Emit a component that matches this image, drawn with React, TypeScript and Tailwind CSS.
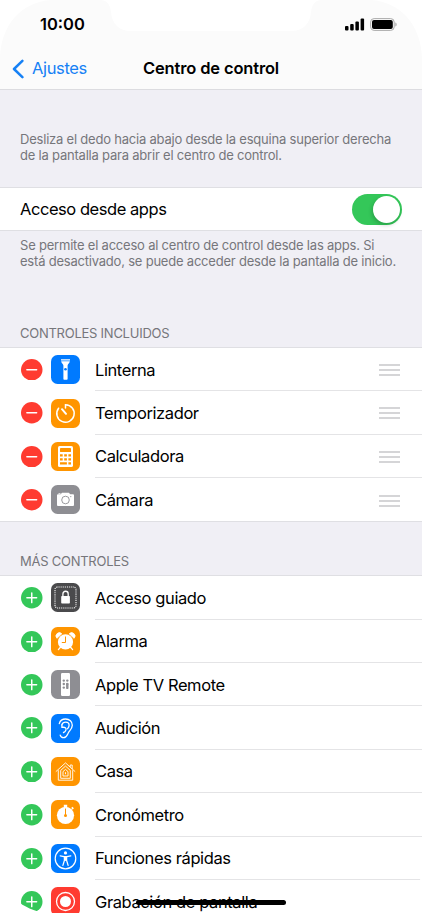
import { ReactNode } from 'react';

const glyphs: Record<string, ReactNode> = {
  flashlight: (
    <>
      <path d="M10 4.3h9v1.2h-9zM10.2 6.2h8.6c0 2-2.2 2.6-2.2 4.4V24a.8.8 0 0 1-.8.8h-2.6a.8.8 0 0 1-.8-.8V10.6c0-1.8-2.2-2.4-2.2-4.4z" fill="#fff" />
      <circle cx="14.5" cy="14.2" r="1.3" fill="#007aff" />
    </>
  ),
  timer: (
    <g fill="none" stroke="#fff" strokeLinecap="round">
      <path d="M14.5 9V5.8a8.7 8.7 0 1 1-6.9 3.400" strokeWidth="1.5" />
      <path d="M11 10.200l4 4.600" strokeWidth="2" />
    </g>
  ),
  calculator: (
    <>
      <rect x="7" y="4" width="15" height="21" rx="1.6" fill="#fff" />
      <g fill="#ff9500">
        <rect x="9" y="6" width="11" height="4" rx=".4" />
        <path d="M9 12.2h2.7v2.2H9zM13.2 12.2h2.7v2.2h-2.7zM17.4 12.2h2.6v2.2h-2.6zM9 16.2h2.7v2.2H9zM13.2 16.2h2.7v2.2h-2.7zM17.4 16.2h2.6v2.2h-2.6zM9 20.2h6.9v2.2H9zM17.4 20.2h2.6v2.2h-2.6z" />
      </g>
    </>
  ),
  camera: (
    <>
      <path d="M7 9.2h2.7l1.3-1.4h6.8l1.5 1.4H22a1 1 0 0 1 1 1v9.9a1 1 0 0 1-1 1H7a1 1 0 0 1-1-1v-9.9a1 1 0 0 1 1-1zM7.5 8h2v.8h-2z" fill="#fff" />
      <circle cx="14.5" cy="15" r="3.8" fill="none" stroke="#8e8e93" strokeWidth=".9" />
      <circle cx="19.8" cy="11.6" r=".6" fill="#8e8e93" />
    </>
  ),
  guided: (
    <>
      <rect x="4" y="4" width="21" height="21" rx="2.5" fill="none" stroke="#fff" strokeWidth="1.1" strokeDasharray="1 .9" />
      <rect x="10.2" y="13" width="8.7" height="7.6" rx=".8" fill="#fff" />
      <path d="M11.9 13.2v-2.3a2.65 2.65 0 0 1 5.3 0v2.3" fill="none" stroke="#fff" strokeWidth="1.3" />
    </>
  ),
  alarm: (
    <>
      <path d="M5.9 11.3a3.2 3.2 0 0 1 4.9-4.5zM23.1 11.3a3.2 3.2 0 0 0-4.9-4.5z" fill="#fff" stroke="#fff" strokeWidth=".8" strokeLinejoin="round" />
      <path d="M9.4 20.3l-2 2.3M19.6 20.3l2 2.3" stroke="#fff" strokeWidth="1.3" strokeLinecap="round" />
      <circle cx="14.5" cy="14.9" r="7.6" fill="#fff" />
      <path d="M14.5 9.5v6h-3.7" fill="none" stroke="#ff9500" strokeWidth="1" />
    </>
  ),
  remote: (
    <>
      <rect x="10" y="3" width="9" height="23" rx="1.2" fill="#fff" />
      <g fill="#8e8e93">
        <circle cx="12.8" cy="10.6" r="1.2" />
        <circle cx="16.3" cy="10.6" r="1.2" />
        <circle cx="12.8" cy="14" r="1.2" />
        <circle cx="16.3" cy="14" r="1.2" />
        <circle cx="12.8" cy="17.6" r="1.2" />
        <rect x="15.1" y="12.9" width="2.4" height="6.2" rx="1.2" />
      </g>
    </>
  ),
  ear: (
    <g fill="none" stroke="#fff" strokeWidth="1.3" strokeLinecap="round" strokeLinejoin="round">
      <path d="M8.3 9.6c.8-3 3.2-4.6 6.3-4.6 3.9 0 6.7 2.6 6.7 6.2 0 3.1-1.9 4.7-3.4 6.6-1.5 2-1.7 5.9-5.2 5.9-1.8 0-3.1-1-3.5-2.6" />
      <path d="M10.9 10.8c.5-1.7 1.9-2.7 3.8-2.7 2.1 0 3.4 1.2 3.4 3.1 0 1.5-.7 2.5-1.5 3.5" />
      <path d="M10.9 10.8v2.6c3.2-.6 4.6.8 4.1 2.5-.4 1.3-1.2 2.3-2.5 2.6" />
    </g>
  ),
  home: (
    <g fill="none" stroke="#fff" strokeWidth=".9" strokeLinejoin="round" strokeLinecap="round">
      <path d="M5.1 14.4l9.4-8.5 9.4 8.5M19.2 9.6V8h2v3.6" />
      <path d="M7.3 13.6v9.6h14.4v-9.6" />
      <path d="M9.7 20.9v-7.5l4.8-4.3 4.8 4.3v7.5z" />
      <path d="M12 18.6v-4l2.5-2.2 2.5 2.2v4z" />
      <path d="M14.5 15.6v1.2" />
    </g>
  ),
  stopwatch: (
    <>
      <circle cx="14.5" cy="15.3" r="8.6" fill="#fff" />
      <path d="M12.8 4.7h3.4v2.5h-3.4zM20.2 8.1l1.2-1.3 1.5 1.4-1.2 1.2z" fill="#fff" />
      <path d="M14.5 9v6" stroke="#ff9500" strokeWidth="1" strokeLinecap="round" />
      <circle cx="14.5" cy="15.5" r="1.5" fill="#ff9500" />
    </>
  ),
  accessibility: (
    <>
      <circle cx="14.5" cy="14.5" r="10.3" fill="none" stroke="#fff" strokeWidth="1.2" />
      <circle cx="14.5" cy="8.9" r="1.6" fill="#fff" />
      <path d="M9.2 11.9l3.9.8h2.8l3.9-.8M13.4 13v3.4l-1.5 5M15.6 13v3.4l1.5 5M14.5 12.8v3.5" fill="none" stroke="#fff" strokeWidth="1.3" strokeLinecap="round" strokeLinejoin="round" />
    </>
  ),
  record: (
    <>
      <circle cx="14.5" cy="14.5" r="9" fill="none" stroke="#fff" strokeWidth="1.3" />
      <circle cx="14.5" cy="14.5" r="5.5" fill="#fff" />
    </>
  ),
};

const included = [
  { label: 'Linterna', glyph: 'flashlight', color: 'bg-[#007aff]' },
  { label: 'Temporizador', glyph: 'timer', color: 'bg-[#ff9500]' },
  { label: 'Calculadora', glyph: 'calculator', color: 'bg-[#ff9500]' },
  { label: 'Cámara', glyph: 'camera', color: 'bg-[#8e8e93]' },
];

const more = [
  { label: 'Acceso guiado', glyph: 'guided', color: 'bg-[#4a4a4c]' },
  { label: 'Alarma', glyph: 'alarm', color: 'bg-[#ff9500]' },
  { label: 'Apple TV Remote', glyph: 'remote', color: 'bg-[#8e8e93]' },
  { label: 'Audición', glyph: 'ear', color: 'bg-[#007aff]' },
  { label: 'Casa', glyph: 'home', color: 'bg-[#ff9500]' },
  { label: 'Cronómetro', glyph: 'stopwatch', color: 'bg-[#ff9500]' },
  { label: 'Funciones rápidas', glyph: 'accessibility', color: 'bg-[#007aff]' },
  { label: 'Grabación de pantalla', glyph: 'record', color: 'bg-[#ff3b30]' },
];

type Item = { label: string; glyph: string; color: string };

function ControlRow({ item, added, last }: { item: Item; added?: boolean; last?: boolean }) {
  return (
    <li className="flex h-[43.4px] items-center pl-[21px]">
      <svg viewBox="0 0 22 22" className="size-[21.5px] shrink-0">
        <circle cx="11" cy="11" r="11" fill={added ? '#ff3b30' : '#34c759'} />
        <path d={added ? 'M6 11h10' : 'M6 11h10M11 6v10'} stroke="#fff" strokeWidth="1.5" strokeLinecap="round" />
      </svg>
      <div className={`ml-[8.5px] size-[29px] shrink-0 rounded-[6.5px] ${item.color}`}>
        <svg viewBox="0 0 29 29" className="size-full">{glyphs[item.glyph]}</svg>
      </div>
      <div
        className={`ml-[15px] flex h-full flex-1 items-center justify-between pt-[1.4px] pr-[22px] ${last ? '' : 'border-b border-[#e4e4e6]'}`}
      >
        <span className="text-[16.5px] tracking-[-0.4px]">{item.label}</span>
        {added && (
          <svg viewBox="0 0 21 12" className="h-3 w-[21px]" stroke="#c8c8ca" strokeWidth="1.4">
            <path d="M0 1h21M0 6h21M0 11h21" />
          </svg>
        )}
      </div>
    </li>
  );
}

export default function App() {
  return (
    <div className="relative flex h-[913px] w-[422px] flex-col overflow-hidden bg-[#f0eff5] font-['Inter',sans-serif] text-black">
      <header className="flex h-[90px] shrink-0 flex-col border-b border-[#dcdce0] bg-[#fbfbfb]">
        <div className="flex h-12 items-center justify-between pr-[25px] pl-10">
          <span className="text-[16.5px] font-semibold">10:00</span>
          <div className="flex items-center gap-[5px]">
            <svg viewBox="0 0 20 13" className="h-[13px] w-5">
              <rect x="0" y="8" width="3.5" height="4.5" rx="1" />
              <rect x="5.2" y="6" width="3.5" height="6.5" rx="1" />
              <rect x="10.4" y="3.4" width="3.5" height="9.1" rx="1" />
              <rect x="15.6" y=".5" width="3.5" height="12" rx="1" />
            </svg>
            <svg viewBox="0 0 27 13" className="h-[13px] w-[27px]">
              <rect x=".6" y=".6" width="23.6" height="11.8" rx="3.5" fill="none" stroke="#aaa" strokeWidth="1" />
              <rect x="2" y="2" width="20.8" height="9" rx="2" />
              <path d="M25.3 4.5c1.8.6 1.8 3.4 0 4z" fill="#aaa" />
            </svg>
          </div>
        </div>
        <nav className="grid h-[41px] grid-cols-[1fr_auto_1fr] items-center">
          <div className="flex items-center pl-[12px] text-[#1681f5]">
            <svg viewBox="0 0 12 20" className="h-5 w-3" fill="none" stroke="currentColor" strokeWidth="2.5" strokeLinecap="round" strokeLinejoin="round">
              <path d="M10.4 1.8L2 10l8.4 8.2" />
            </svg>
            <span className="ml-2 text-[16.5px] tracking-[-0.35px]">Ajustes</span>
          </div>
          <h1 className="text-[16.5px] font-semibold tracking-[-0.15px]">Centro de control</h1>
        </nav>
      </header>

      <main className="flex flex-col">
        <p className="h-[97px] pt-[41px] pl-5 text-[13px] leading-[16px] tracking-[-0.21px] text-[#76767b]">
          Desliza el dedo hacia abajo desde la esquina superior derecha
          <br />
          de la pantalla para abrir el centro de control.
        </p>
        <div className="flex h-[44px] items-center justify-between border-y border-[#dfdfe3] bg-white pr-5 pl-5">
          <span className="text-[16.5px] tracking-[-0.45px]">Acceso desde apps</span>
          <div className="flex h-[31px] w-[50.5px] items-center justify-end rounded-full bg-[#34c759] pr-[2px]">
            <div className="size-[27px] rounded-full bg-white shadow-[-1px_2px_4px_rgba(0,0,0,0.2)]" />
          </div>
        </div>
        <p className="h-[94px] pt-[6px] pl-5 text-[13px] leading-[16px] tracking-[-0.21px] text-[#76767b]">
          Se permite el acceso al centro de control desde las apps. Si
          <br />
          está desactivado, se puede acceder desde la pantalla de inicio.
        </p>
        <h2 className="h-[22px] pl-5 text-[13px] leading-[16px] tracking-[-0.25px] text-[#76767b]">CONTROLES INCLUIDOS</h2>
        <ul className="h-[174.6px] border-y border-[#dfdfe3] bg-white">
          {included.map((item, i) => (
            <ControlRow key={item.label} item={item} added last={i === included.length - 1} />
          ))}
        </ul>
        <h2 className="h-[53.7px] pt-[31.4px] pl-5 text-[13px] leading-[16px] tracking-[-0.25px] text-[#76767b]">MÁS CONTROLES</h2>
        <ul className="border-t border-[#dfdfe3] bg-white">
          {more.map((item) => (
            <ControlRow key={item.label} item={item} />
          ))}
        </ul>
      </main>

      {/* notch, screen corners and home indicator */}
      <svg viewBox="0 0 422 100" className="absolute top-0 left-0 h-[100px] w-full" fill="#fff">
        <path d="M0 0H51C22 2 1 24 0 58zM422 0H371C400 2 421 24 422 58z" />
        <path d="M101 0h220c-7 1-9 5-10 12-1 12-8 19-20 19H131c-12 0-19-7-20-19-1-7-3-11-10-12z" />
      </svg>
      <svg viewBox="0 0 422 40" className="absolute bottom-0 left-0 h-10 w-full" fill="#fff">
        <path d="M0 0C4 17 14 31 38 38.5V40H0zM422 0C418 17 408 31 384 38.5V40h38z" />
      </svg>
      <div className="absolute bottom-[8px] left-[136px] h-[5px] w-[150px] rounded-full bg-black" />
    </div>
  );
}
